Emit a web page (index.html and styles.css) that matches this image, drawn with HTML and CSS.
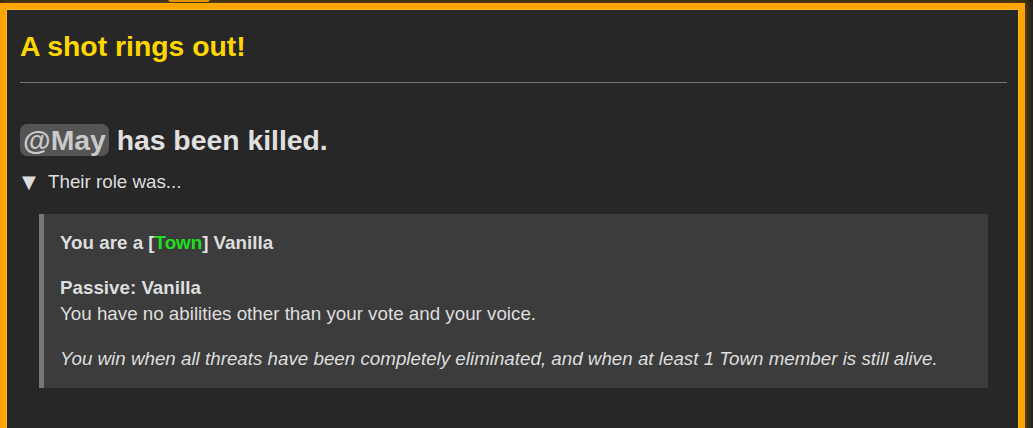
FILE: index.html
```html
<!DOCTYPE html>
<html>
<head>
<meta charset="utf-8">
<link rel="stylesheet" href="styles.css">
</head>
<body>
<div class="tab"></div>
<div class="card">
  <h2 class="title">A shot rings out!</h2>
  <hr class="rule">
  <h2 class="killed"><span class="mention">@May</span> has been killed.</h2>
  <div class="summary"><span class="marker">▼</span>Their role was...</div>
  <div class="role">
    <p class="role-head">You are a [<span class="town">Town</span>] Vanilla</p>
    <p class="role-p"><b>Passive: Vanilla</b><br>You have no abilities other than your vote and your voice.</p>
    <p class="role-win">You win when all threats have been completely eliminated, and when at least 1 Town member is still alive.</p>
  </div>
</div>
</body>
</html>
```
FILE: styles.css
```css
html, body {
  margin: 0;
  padding: 0;
  background: #1c1c1c;
  overflow: hidden;
  height: 428px;
}
body {
  font-family: "Liberation Sans", Arial, sans-serif;
  font-size: 18.78px;
  color: #dedede;
  position: relative;
}
.tab {
  position: absolute;
  left: 168px;
  top: -4px;
  width: 42px;
  height: 6px;
  background: #e8930a;
  border-radius: 0 0 3px 3px;
}
.card {
  margin: 3px 8px 0 0;
  border: 6px solid #ffa500;
  box-shadow: 0 0 9px 3px rgba(255, 165, 0, 0.3), inset 0 0 0 1px #ffb52e;
  background: #272727;
  padding: 21px 12px 60px 14px;
}
.title {
  margin: 0;
  font-size: 28.35px;
  line-height: 32px;
  color: #ffd700;
  font-weight: bold;
}
.rule {
  margin: 20px 0 0 0;
  border: 0;
  border-top: 1px solid #777;
  height: 0;
}
.killed {
  margin: 41px 0 0 0;
  font-size: 28.35px;
  line-height: 32px;
  font-weight: bold;
  color: #e0e0e0;
}
.mention {
  background: #545454;
  color: #c9c9c9;
  border-radius: 7px;
  padding: 0 3px;
  display: inline-block;
}
.summary {
  margin-top: 13px;
  line-height: 26px;
}
.marker {
  font-family: "DejaVu Sans", sans-serif;
  display: inline-block;
  width: 26px;
  padding-left: 2px;
  font-size: 18px;
}
.role {
  margin: 19px 19px 0 19px;
  background: #3c3c3c;
  border-left: 5px solid #777;
  padding: 16px 16px 16px 16px;
  line-height: 26px;
}
.role p {
  margin: 19px 0 0 0;
}
.role p.role-head {
  margin-top: 0;
  font-weight: bold;
}
.town {
  color: #1ee01e;
}
.role-win {
  font-style: italic;
}
```
